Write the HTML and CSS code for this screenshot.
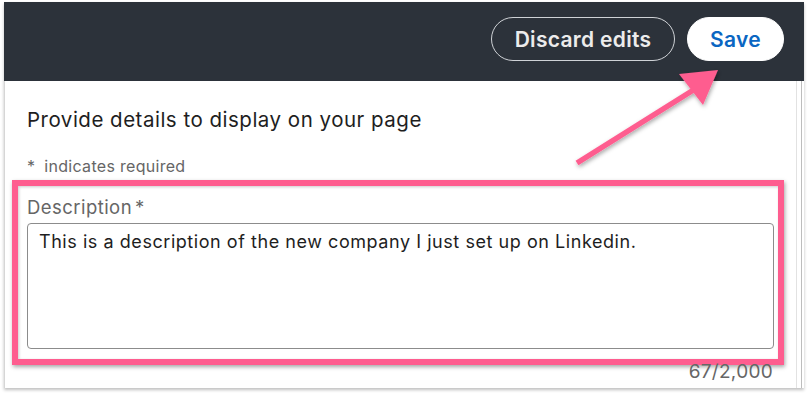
FILE: index.html
```html
<!DOCTYPE html>
<html>
<head>
<meta charset="utf-8">
<link rel="stylesheet" href="styles.css">
</head>
<body>
<div class="window">
  <header class="topbar">
    <button class="btn btn-discard">Discard edits</button>
    <button class="btn btn-save">Save</button>
  </header>
  <main class="content">
    <h2 class="title">Provide details to display on your page</h2>
    <p class="req"><span class="reqstar">*</span>indicates required</p>
    <div class="field">
      <div class="label">Description<span class="star">*</span></div>
      <div class="textarea">This is a description of the new company I just set up on Linkedin.</div>
    </div>
    <div class="counter">67/2,000</div>
  </main>
  <div class="scrollbar"></div>
  <svg class="arrow" width="808" height="395" viewBox="0 0 808 395">
    <defs>
      <filter id="sh" x="-20%" y="-20%" width="140%" height="140%">
        <feDropShadow dx="1" dy="2" stdDeviation="2" flood-color="#000" flood-opacity="0.35"/>
      </filter>
    </defs>
    <g filter="url(#sh)" fill="#fe5d8f" stroke="none">
      <line x1="576" y1="163" x2="694" y2="89" stroke="#fe5d8f" stroke-width="5.5" stroke-linecap="butt"/>
      <polygon points="717,70 678,74 702,105"/>
    </g>
  </svg>
</div>
</body>
</html>
```

FILE: styles.css
```css
* { box-sizing: border-box; }
html, body { margin: 0; padding: 0; background: #fff; }
body { font-family: "Inter", "Liberation Sans", sans-serif; width: 808px; height: 395px; overflow: hidden; }

.window {
  position: relative;
  margin: 2px 0 0 4px;
  width: 800px;
  height: 386px;
  background: #fff;
  border-left: 1px solid #d6d6d6;
  box-shadow: 0 2px 3px rgba(0,0,0,0.25);
}

.topbar {
  height: 79px;
  margin-left: -1px;
  background: #2c323a;
  display: flex;
  justify-content: flex-end;
  align-items: flex-start;
  gap: 12px;
  padding: 15px 20px 0 0;
}

.btn {
  height: 44px;
  border-radius: 22px;
  font-family: "Inter", "Liberation Sans", sans-serif;
  font-weight: 600;
  font-size: 21px;
  letter-spacing: 0.3px;
  padding: 0;
  cursor: pointer;
}
.btn-discard {
  width: 184px;
  background: transparent;
  border: 1px solid #cfd2d6;
  color: #ececec;
}
.btn-save {
  width: 97px;
  background: #fff;
  border: 1px solid #fff;
  color: #0a66c2;
}

.content {
  padding: 27px 20px 0 7px;
  letter-spacing: 0.3px;
}

.title {
  margin: 0 0 24px 15px;
  font-size: 20.5px;
  letter-spacing: 0.5px;
  line-height: 24px;
  font-weight: 400;
  color: #1e1e1e;
}

.req {
  margin: 0 0 4px 15px;
  font-size: 16px;
  line-height: 20px;
  color: #666;
}
.reqstar { margin-right: 9px; }

.field {
  border: 6px solid #fe5d8f;
  box-shadow: 1px 2px 4px rgba(0,0,0,0.35), inset 1px 1px 3px rgba(0,0,0,0.2);
  padding: 10px 4px 10px 9px;
}

.label {
  font-size: 18.5px;
  letter-spacing: 0.45px;
  line-height: 22px;
  color: #666;
  margin-bottom: 5px;
}
.star { margin-left: 3px; }

.textarea {
  height: 126px;
  border: 1px solid #8c8c8c;
  border-radius: 4px;
  padding: 7px 11px;
  font-size: 18px;
  letter-spacing: 0.55px;
  line-height: 22px;
  color: #1e1e1e;
}

.counter {
  margin-top: -4px;
  text-align: right;
  padding-right: 11px;
  font-size: 19px;
  line-height: 22px;
  color: #666;
}

.scrollbar {
  position: absolute;
  right: 2px;
  top: 79px;
  bottom: 0;
  width: 6px;
  border-left: 1px solid #e2e2e2;
  border-right: 1px solid #bdbdbd;
}

.arrow {
  position: absolute;
  left: -4px;
  top: -2px;
  pointer-events: none;
}
```
